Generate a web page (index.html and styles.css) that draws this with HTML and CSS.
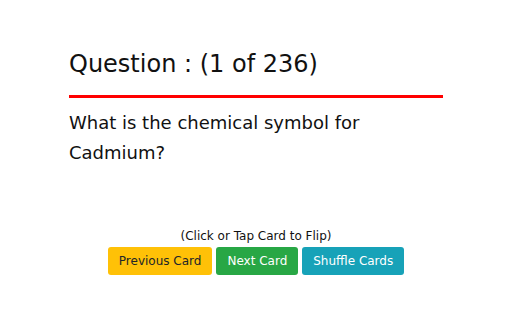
FILE: index.html
```html
<!DOCTYPE html>
<html lang="en">
<head>
    <meta charset="UTF-8">
    <meta name="viewport" content="width=device-width, initial-scale=1.0">
    <title>Flash Cards</title>
    <link rel="stylesheet" href="styles.css">
</head>
<body>
    <div class="card">
        <h2 class="title">Question : (1 of 236)</h2>
        <p class="question">What is the chemical symbol for Cadmium?</p>
    </div>
    <div class="controls">
        <div class="hint">(Click or Tap Card to Flip)</div>
        <div class="buttons">
            <button class="btn prev">Previous Card</button>
            <button class="btn next">Next Card</button>
            <button class="btn shuffle">Shuffle Cards</button>
        </div>
    </div>
</body>
</html>
```

FILE: styles.css
```css
body {
    margin: 0;
    background: #fff;
    font-family: "Comic Sans MS", "DejaVu Sans", sans-serif;
    color: #111;
}

.card {
    width: 374px;
    margin: 0 auto;
    padding-top: 47px;
    height: 180px;
    box-sizing: border-box;
}

.title {
    margin: 0;
    font-size: 24px;
    font-weight: normal;
    line-height: 34px;
    padding-bottom: 14px;
    border-bottom: 3px solid #f00;
}

.question {
    margin: 10px 0 0;
    font-size: 18px;
    line-height: 30px;
    width: 300px;
}

.controls {
    margin-top: 48px;
    text-align: center;
}

.hint {
    font-size: 12px;
    line-height: 16px;
}

.buttons {
    display: flex;
    justify-content: center;
    gap: 4px;
    margin-top: 3px;
}

.btn {
    font-family: inherit;
    font-size: 12px;
    height: 28px;
    padding: 0 11px;
    border: none;
    border-radius: 3px;
    color: #fff;
}

.prev {
    background: #ffc107;
    color: #212529;
}

.next {
    background: #28a745;
}

.shuffle {
    background: #17a2b8;
}
```
